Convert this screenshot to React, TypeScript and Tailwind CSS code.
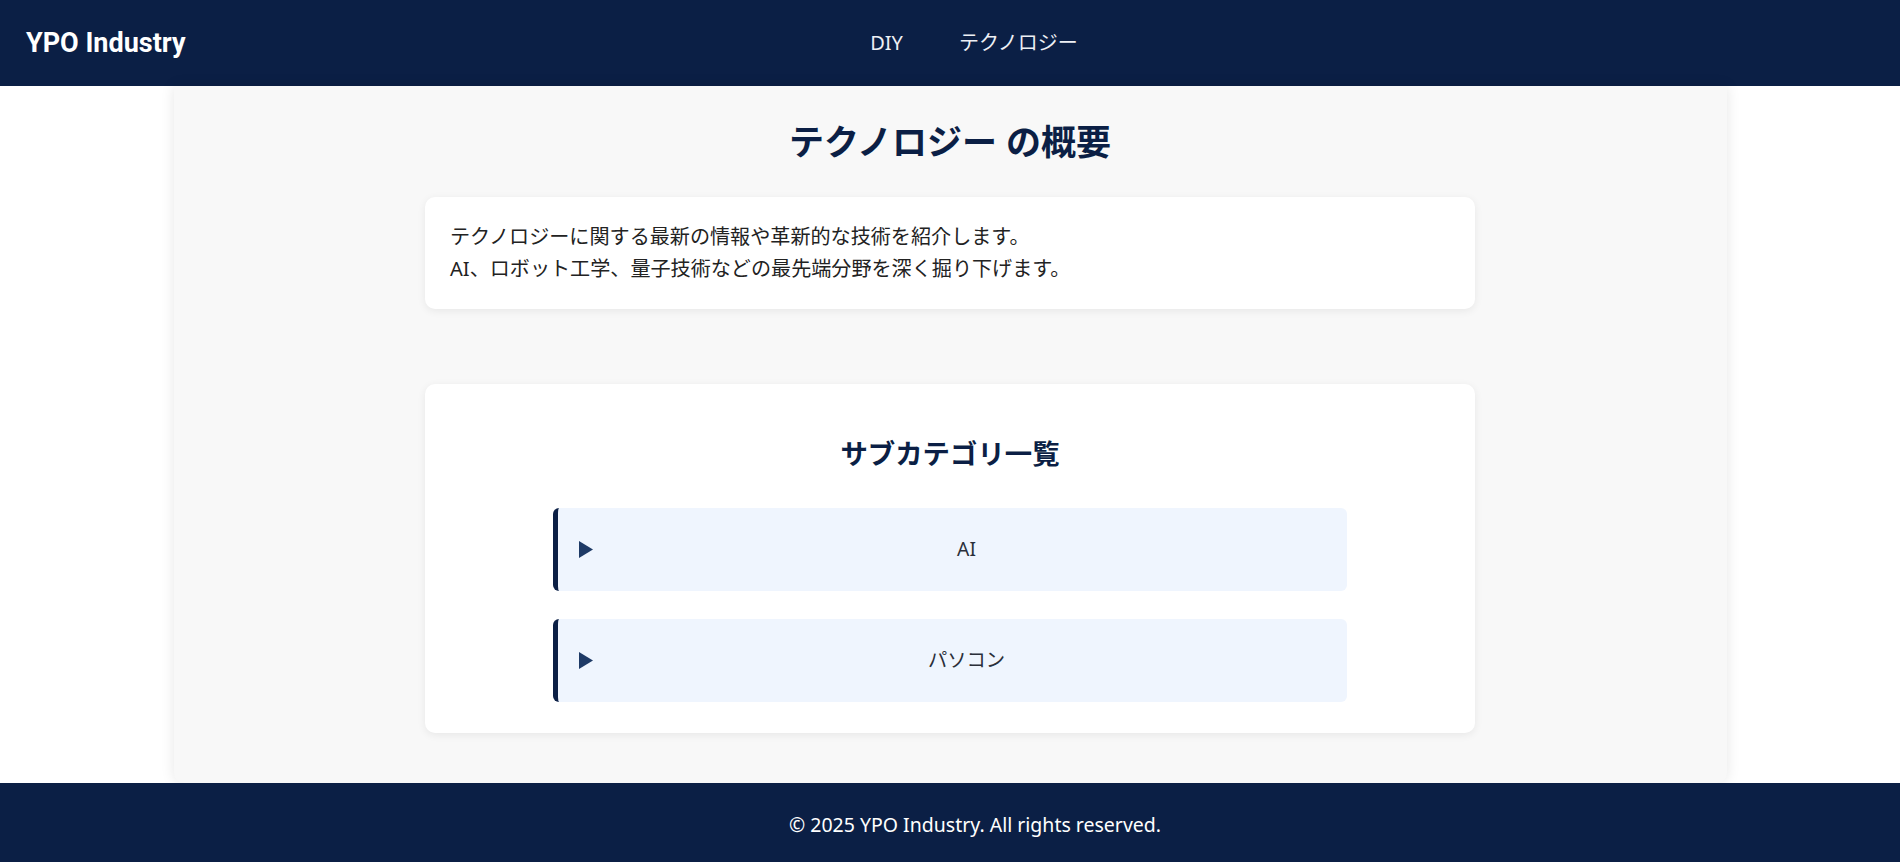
const subcategories = ['AI', 'パソコン']

function Triangle() {
  return (
    <svg width="14" height="17" viewBox="0 0 14 17" className="shrink-0">
      <polygon points="0,0 14,8.5 0,17" fill="#1e3a66" />
    </svg>
  )
}

export default function App() {
  return (
    <div className="min-h-screen flex flex-col bg-white font-['Noto_Sans','Noto_Sans_CJK_JP',sans-serif]">
      {/* Header */}
      <header className="h-[86px] shrink-0 bg-[#0b1f45] flex items-center px-[26px]">
        <div className="w-[160px] shrink-0 text-white text-[27px] font-bold font-['Roboto','Noto_Sans_CJK_JP',sans-serif] leading-none">
          YPO Industry
        </div>
        <nav className="flex-1 flex justify-center items-center gap-[56px] text-[20px] text-[#eef0f5]">
          <a href="#">DIY</a>
          <a href="#">テクノロジー</a>
        </nav>
        <div className="w-[112px] shrink-0" />
      </header>

      {/* Main */}
      <main className="flex-1 flex flex-col">
        <div className="flex-1 w-[1553px] mx-auto bg-[#f8f8f8] rounded-b-[10px] shadow-[0_0_14px_rgba(0,0,0,0.10)] pt-[31px] pb-[48px]">
          <h1 className="text-center text-[35px] font-bold leading-[49px] text-[#0b1f45]">
            テクノロジー の概要
          </h1>

          <section className="w-[1050px] mx-auto mt-[31px] bg-white rounded-[10px] shadow-[0_2px_8px_rgba(0,0,0,0.07)] px-[25px] py-[24px] text-[20.1px] leading-[32px] text-[#222]">
            <p>テクノロジーに関する最新の情報や革新的な技術を紹介します。</p>
            <p>AI、ロボット工学、量子技術などの最先端分野を深く掘り下げます。</p>
          </section>

          <section className="w-[1050px] mx-auto mt-[75px] bg-white rounded-[10px] shadow-[0_2px_8px_rgba(0,0,0,0.07)] pt-[50px] pb-[31px]">
            <h2 className="text-center text-[27.4px] font-bold leading-[40px] text-[#0b1f45]">
              サブカテゴリ一覧
            </h2>
            <div className="mt-[34px] flex flex-col gap-[28px]">
              {subcategories.map(name => (
                <div
                  key={name}
                  className="w-[794px] mx-auto h-[83px] flex items-center bg-[#eff5fe] border-l-[5px] border-[#0b1f45] rounded-[6px] pl-[21px] pr-[22px] gap-[15px]"
                >
                  <Triangle />
                  <span className="flex-1 text-center text-[19.3px] text-[#2a2f3a]">{name}</span>
                </div>
              ))}
            </div>
          </section>
        </div>
      </main>

      {/* Footer */}
      <footer className="h-[79px] shrink-0 bg-[#0b1f45] flex items-center justify-center pl-[50px] pt-[4px] text-white text-[19.5px]">
        © 2025 YPO Industry. All rights reserved.
      </footer>
    </div>
  )
}
